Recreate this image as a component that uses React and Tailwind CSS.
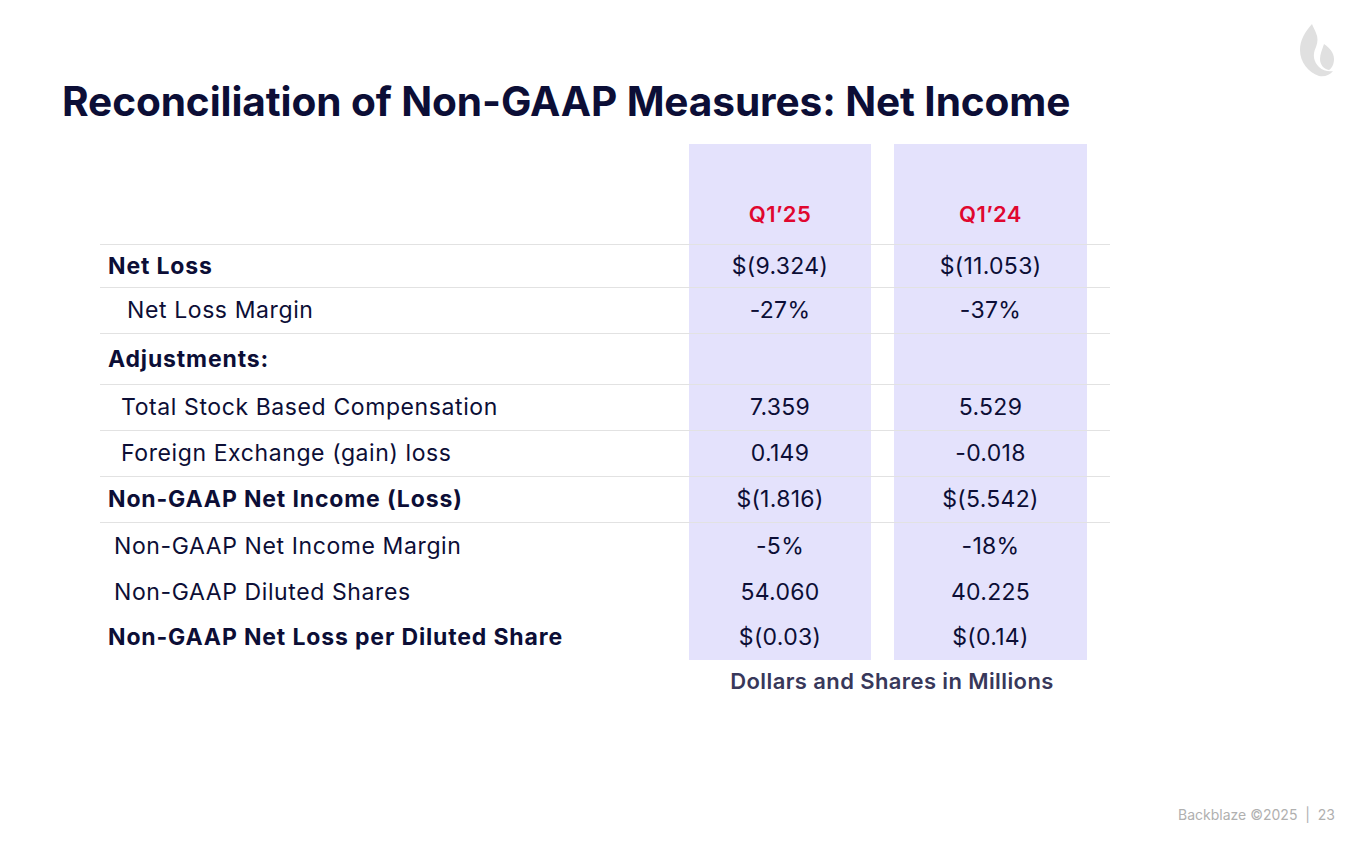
const rows = [
  { label: 'Net Loss', a: '$(9.324)', b: '$(11.053)', bold: true, indent: 'pl-[8px]', h: 'h-[43px]', line: true },
  { label: 'Net Loss Margin', a: '-27%', b: '-37%', indent: 'pl-[27px]', h: 'h-[46px]', line: true },
  { label: 'Adjustments:', a: '', b: '', bold: true, indent: 'pl-[8px]', h: 'h-[51px]', line: true },
  { label: 'Total Stock Based Compensation', a: '7.359', b: '5.529', indent: 'pl-[21px]', h: 'h-[46px]', line: true },
  { label: 'Foreign Exchange (gain) loss', a: '0.149', b: '-0.018', indent: 'pl-[21px]', h: 'h-[46px]', line: true },
  { label: 'Non-GAAP Net Income (Loss)', a: '$(1.816)', b: '$(5.542)', bold: true, indent: 'pl-[8px]', h: 'h-[46px]', line: true },
  { label: 'Non-GAAP Net Income Margin', a: '-5%', b: '-18%', indent: 'pl-[14px]', h: 'h-[46px]' },
  { label: 'Non-GAAP Diluted Shares', a: '54.060', b: '40.225', indent: 'pl-[14px]', h: 'h-[46px]' },
  { label: 'Non-GAAP Net Loss per Diluted Share', a: '$(0.03)', b: '$(0.14)', bold: true, indent: 'pl-[8px]', h: 'h-[45px]' },
]

function Flame() {
  return (
    <svg width="36" height="56" viewBox="0 0 36 56" className="text-[#e0e0e0]">
      <path
        fill="currentColor"
        d="M13 2 C6 10 1 18 1 28 C1 40 9 50 20 54 C26 55 31 53 34 49 C30 50 24 49 20 45 C15 40 13 33 17 25 C19 20 19 15 17 11 C16 8 14 5 13 2 Z"
      />
      <path
        fill="currentColor"
        d="M25 22 C23 28 21 32 21 37 C21 43 25 47 30 48 C33 46 35 42 35 37 C35 31 31 26 25 22 Z"
      />
    </svg>
  )
}

export default function App() {
  return (
    <div
      className="relative h-[853px] w-[1365px] overflow-hidden bg-white text-[#0c0e36]"
      style={{ fontFamily: 'Inter, "Open Sans", sans-serif' }}
    >
      <div className="absolute right-[30px] top-[22px]">
        <Flame />
      </div>

      <h1 className="pl-[62px] pt-[78px] text-[40.6px] font-bold leading-[48px] tracking-[-0.1px]">
        Reconciliation of Non-GAAP Measures: Net Income
      </h1>

      <div className="ml-[100px] mt-[18px] w-[1010px]">
        <div className="flex h-[101px] border-b border-[#e2e2e2]">
          <div className="w-[589px]" />
          <div className="flex w-[182px] items-end justify-center bg-[#e4e2fc] pb-[13px] text-[22px] font-semibold tracking-[0.4px] text-[#e0072f]">
            Q1’25
          </div>
          <div className="w-[23px]" />
          <div className="flex w-[193px] items-end justify-center bg-[#e4e2fc] pb-[13px] text-[22px] font-semibold tracking-[0.4px] text-[#e0072f]">
            Q1’24
          </div>
          <div className="w-[23px]" />
        </div>

        {rows.map((r) => (
          <div
            key={r.label}
            className={`flex ${r.h} items-center text-[23px] ${r.line ? 'border-b border-[#e2e2e2]' : ''}`}
          >
            <div
              className={`w-[589px] ${r.indent} ${r.bold ? 'font-bold tracking-[0.85px]' : 'tracking-[0.6px]'}`}
            >
              {r.label}
            </div>
            <div className="flex h-full w-[182px] items-center justify-center bg-[#e4e2fc] tracking-[0.3px]">{r.a}</div>
            <div className="w-[23px]" />
            <div className="flex h-full w-[193px] items-center justify-center bg-[#e4e2fc] tracking-[0.3px]">{r.b}</div>
            <div className="w-[23px]" />
          </div>
        ))}

        <div className="ml-[593px] w-[398px] pt-[5px] text-center text-[22px] font-semibold tracking-[0.4px] text-[#38385a]">
          Dollars and Shares in Millions
        </div>
      </div>

      <div className="absolute bottom-[28px] right-[30px] text-[14px] text-[#b0b0b0]">
        Backblaze ©2025&nbsp;&nbsp;|&nbsp;&nbsp;23
      </div>
    </div>
  )
}
